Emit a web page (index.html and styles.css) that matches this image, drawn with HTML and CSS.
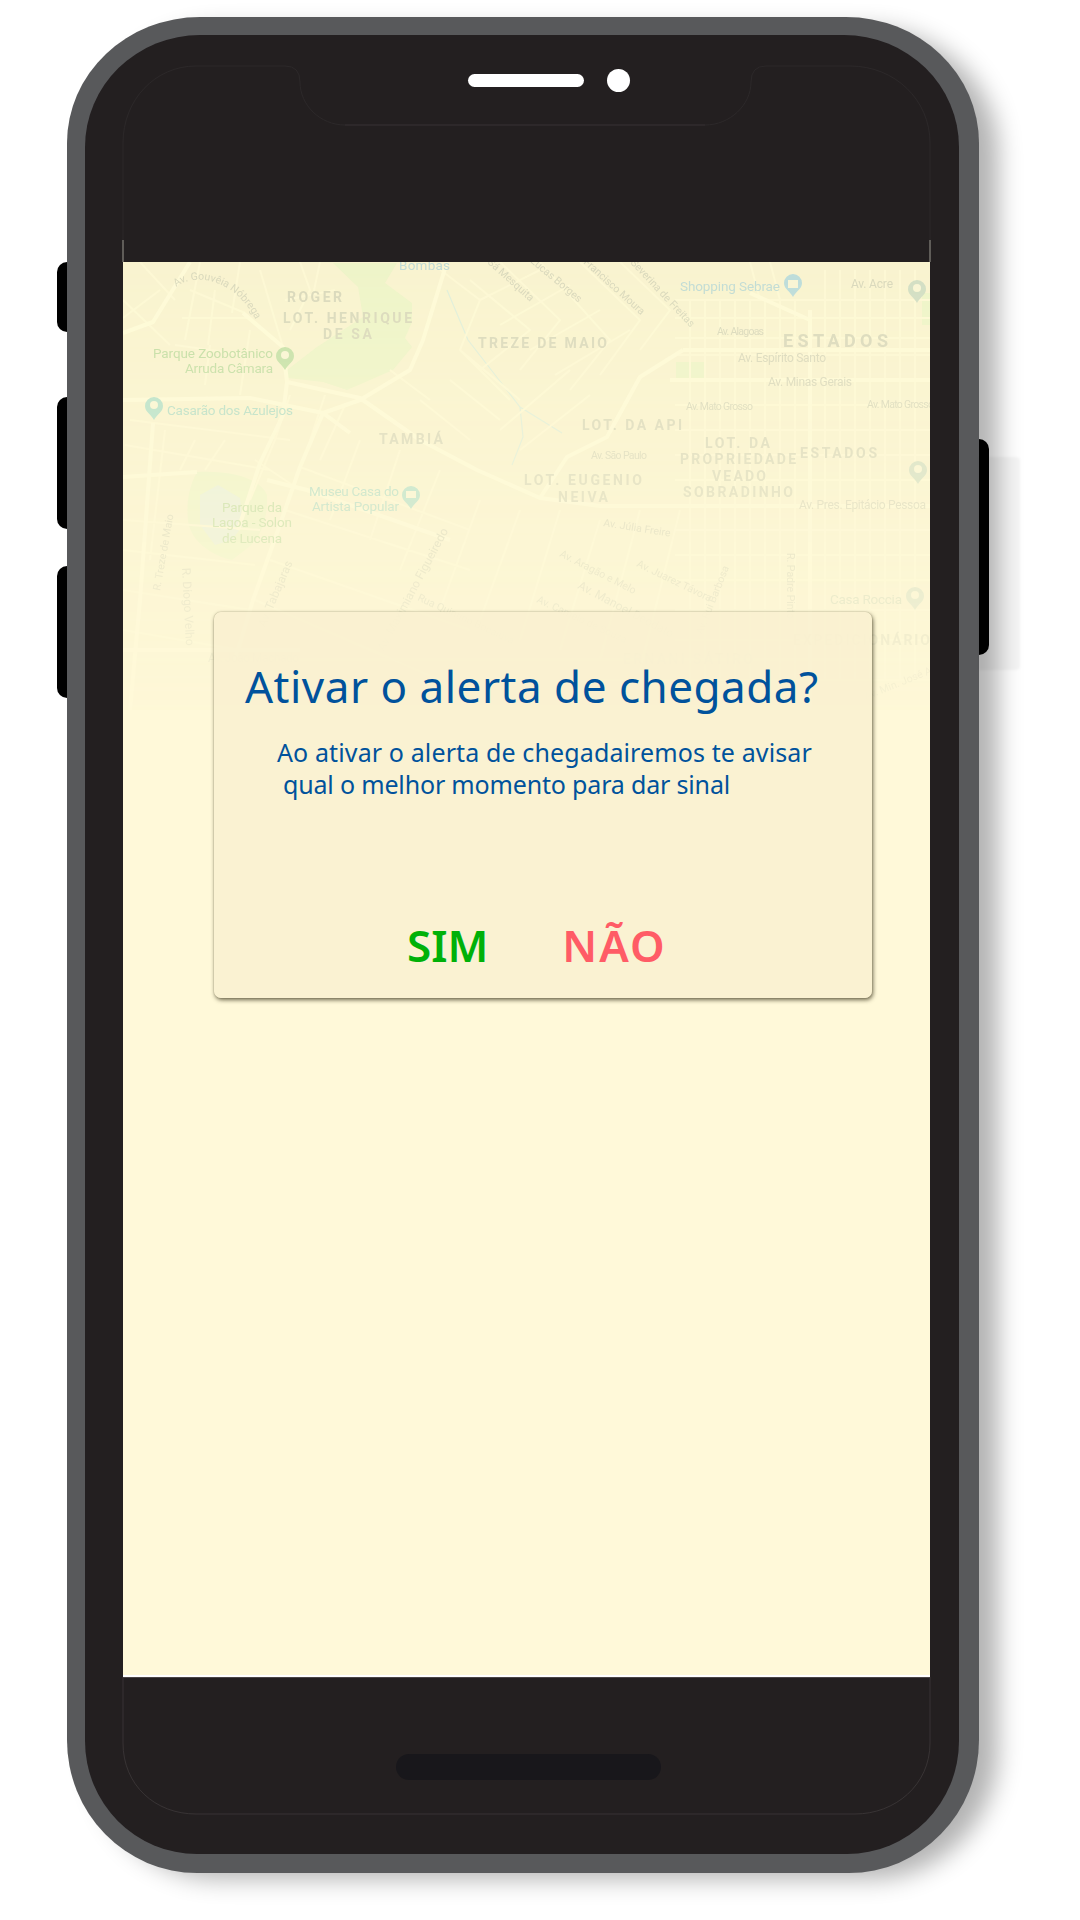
FILE: index.html
```html
<!DOCTYPE html>
<html lang="pt-BR">
<head>
<meta charset="utf-8">
<title>Alerta de chegada</title>
<link rel="stylesheet" href="styles.css">
</head>
<body>
<div class="phone">
  <span class="side-btn left b1"></span>
  <span class="side-btn left b2"></span>
  <span class="side-btn left b3"></span>
  <span class="side-btn right b4"></span>
  <div class="device">
    <div class="top-bar">
      <span class="speaker"></span>
      <span class="camera"></span>
    </div>
    <div class="screen">
      <svg class="map" width="807" height="448" viewBox="123 262 807 448" xmlns="http://www.w3.org/2000/svg">
        <defs>
          <path id="pin" d="M0-11a9 9 0 0 1 9 9c0 6-6 8-9 14c-3-6-9-8-9-14a9 9 0 0 1 9-9z"/>
          <path id="c1" d="M176 287C195 272 225 282 240 298S258 325 262 335"/>
        </defs>
        <rect class="land" x="123" y="262" width="807" height="448"/>
        <path class="park" d="M333 263H397L385 283L412 303V322L405 338L412 347L393 370L347 390L323 382L288 378L287 370L317 347L363 317L358 287Z"/>
        <path class="park" d="M197 472C230 470 260 478 267 495C268 520 260 540 245 550L232 560C210 555 190 540 188 520C186 500 190 485 197 472Z"/>
        <path class="lake" d="M200 495L218 485L240 498L243 525L232 540L215 545L200 525Z"/>
        <rect class="park" x="676" y="362" width="28" height="18"/>
        <rect class="park" x="922" y="293" width="8" height="32"/>
        <path class="water" d="M447 290L468 340L520 407L562 433M520 407L523 437L512 465"/>
        <path class="minor" d="M123 300L170 345M123 318L160 290M140 262L175 300M190 290L245 313M200 262L185 340M215 290L208 345M240 262L232 313M182 318H250M175 345L245 355M210 345L205 385M250 330L240 395
          M300 262L310 290L290 330M320 262L312 300M285 300L335 290M260 270L283 347M290 395L275 440L250 500M325 395L310 440M345 405L320 460M130 420L290 440M125 445L270 470M123 520L260 530M123 550L255 565M123 590L250 610M123 630L240 650M165 430L150 560M195 440L180 470M225 440L205 470M255 460L300 490
          M300 467L470 530M285 510L470 570M270 560L470 630M255 600L440 680M360 440L330 520M400 450L370 540M440 470L400 570M480 500L440 610M520 510L480 620M560 510L520 640M600 520L560 650M640 510L600 660M680 510L640 670
          M430 262L480 300L460 350L520 400M470 280L530 330L480 370M500 262L560 320L520 370M540 262L610 340L570 390M580 262L640 320L600 375M620 262L670 310L640 350M480 300L540 270M500 325L570 285M530 350L600 310M555 375L630 330M460 350L510 400M590 395L520 450M570 370L500 430M450 380L500 420M420 400L470 440M390 370L430 400
          M690 300V680M705 300V680M720 300V680M735 300V680M750 300V680M765 300V680M780 300V680M795 300V680M825 270V680M840 270V680M855 270V680M870 270V680M885 270V680M900 270V680M915 270V680
          M675 300H930M675 318H930M675 338H930M675 355H930M675 405H930M675 430H930M675 455H930M675 480H930M675 530H930M675 555H930M675 580H930M675 610H930M675 640H930M600 680H930M750 262L760 300M770 262L780 300"/>
        <path class="major" d="M447 262L423 340L410 370L360 400L323 413L300 467L277 533L253 600L235 660M123 333L153 322L177 283L190 262M243 313L283 347L287 382L360 398L420 440L477 470L540 498L600 506H930M287 382L283 415L260 463L238 530M153 423L140 600L130 710M123 400L250 398L323 413L350 433M123 477L197 472M267 480L307 490L450 540M683 350L640 377L607 437L567 457L540 498M683 350H930M810 310V710M670 380H930M750 293L810 320M123 650H300"/>
        <g class="pin green"><use href="#pin" x="285" y="358"/><circle cx="285" cy="355" r="4"/></g>
        <g class="pin teal"><use href="#pin" x="154" y="408"/><circle cx="154" cy="405" r="4"/></g>
        <g class="pin teal"><use href="#pin" x="411" y="497"/><rect x="406" y="491" width="10" height="7"/></g>
        <g class="pin blue"><use href="#pin" x="793" y="285"/><rect x="788" y="280" width="10" height="8"/></g>
        <g class="pin grey"><use href="#pin" x="917" y="291"/><circle cx="917" cy="288" r="4"/></g>
        <g class="pin grey"><use href="#pin" x="918" y="472"/><circle cx="918" cy="469" r="4"/></g>
        <g class="pin grey"><use href="#pin" x="915" y="598"/><circle cx="915" cy="595" r="4"/></g>

        <text class="district" x="287" y="302" textLength="55">ROGER</text>
        <text class="district" x="283" y="323" textLength="129">LOT. HENRIQUE</text>
        <text class="district" x="323" y="339" textLength="49">DE SA</text>
        <text class="district" x="478" y="348" textLength="129">TREZE DE MAIO</text>
        <text class="district" x="379" y="444" textLength="64">TAMBIÁ</text>
        <text class="district big" x="783" y="347" textLength="105">ESTADOS</text>
        <text class="district" x="582" y="430" textLength="100">LOT. DA API</text>
        <text class="district" x="705" y="448" textLength="65">LOT. DA</text>
        <text class="district" x="680" y="464" textLength="116">PROPRIEDADE</text>
        <text class="district" x="712" y="481" textLength="54">VEADO</text>
        <text class="district" x="683" y="497" textLength="110">SOBRADINHO</text>
        <text class="district" x="800" y="458" textLength="77">ESTADOS</text>
        <text class="district" x="524" y="485" textLength="118">LOT. EUGENIO</text>
        <text class="district" x="558" y="502" textLength="50">NEIVA</text>
        <text class="district" x="793" y="645" textLength="137">EXPEDICIONÁRIO</text>
        <text class="district" x="623" y="664" textLength="130">ERNANI SÁTIRO</text>

        <text class="poi g" x="153" y="358" textLength="120">Parque Zoobotânico</text>
        <text class="poi g" x="185" y="373" textLength="88">Arruda Câmara</text>
        <text class="poi t" x="167" y="415" textLength="126">Casarão dos Azulejos</text>
        <text class="poi t" x="309" y="496" textLength="90">Museu Casa do</text>
        <text class="poi t" x="312" y="511" textLength="87">Artista Popular</text>
        <text class="poi g" x="222" y="512" textLength="60">Parque da</text>
        <text class="poi g" x="212" y="527" textLength="80">Lagoa - Solon</text>
        <text class="poi g" x="222" y="543" textLength="60">de Lucena</text>
        <text class="poi b" x="680" y="291" textLength="100">Shopping Sebrae</text>
        <text class="poi b" x="399" y="270" textLength="51">Bombas</text>
        <text class="poi c" x="830" y="604" textLength="72">Casa Roccia</text>

        <text class="street" x="851" y="288" textLength="42">Av. Acre</text>
        <text class="street sm" x="717" y="335" textLength="47">Av. Alagoas</text>
        <text class="street" x="738" y="362" textLength="88">Av. Espírito Santo</text>
        <text class="street" x="768" y="386" textLength="84">Av. Minas Gerais</text>
        <text class="street sm" x="686" y="410" textLength="67">Av. Mato Grosso</text>
        <text class="street sm" x="867" y="408" textLength="67">Av. Mato Grosso</text>
        <text class="street sm" x="591" y="459" textLength="56">Av. São Paulo</text>
        <text class="street" x="799" y="509" textLength="127">Av. Pres. Epitácio Pessoa</text>
        <text class="street" x="208" y="662" textLength="91">Av. João Machado</text>

        <text class="street sm"><textPath href="#c1">Av. Gouvêia Nóbrega</textPath></text>
        <text class="street sm" transform="translate(583 263) rotate(42)">Francisco Moura</text>
        <text class="street sm" transform="translate(630 263) rotate(47)">Severina de Freitas</text>
        <text class="street sm" transform="translate(530 262) rotate(40)">Lucas Borges</text>
        <text class="street sm" transform="translate(487 263) rotate(42)">Sá Mesquita</text>
        <text class="street sm" transform="translate(160 591) rotate(-80)">R. Treze de Maio</text>
        <text class="street" transform="translate(182 568) rotate(87)">R. Diogo Velho</text>
        <text class="street" transform="translate(265 628) rotate(-67)">Av. Tabajaras</text>
        <text class="street" transform="translate(384 652) rotate(-62)">Av. Maximiano Figueiredo</text>
        <text class="street sm" transform="translate(417 600) rotate(25)">Rua Quintino Bocaiúva</text>
        <text class="street sm" transform="translate(603 526) rotate(9)">Av. Júlia Freire</text>
        <text class="street sm" transform="translate(559 556) rotate(27)">Av. Aragão e Melo</text>
        <text class="street sm" transform="translate(636 566) rotate(26)">Av. Juarez Távora</text>
        <text class="street" transform="translate(577 588) rotate(28)">Av. Manoel Deodato</text>
        <text class="street sm" transform="translate(536 602) rotate(25)">Av. Camelo de Souza</text>
        <text class="street sm" transform="translate(702 635) rotate(-68)">Av. Rui Barbosa</text>
        <text class="street sm" transform="translate(787 553) rotate(90)">R. Padre Pinto</text>
        <text class="street sm" transform="translate(866 700) rotate(-22)">Av. Min. José Américo</text>
      </svg>
      <div class="dialog">
        <h1 class="dialog-title">Ativar o alerta de chegada?</h1>
        <p class="dialog-text">Ao ativar o alerta de chegadairemos te avisar<br>qual o melhor momento para dar sinal</p>
        <div class="dialog-actions">
          <span class="action yes">SIM</span>
          <span class="action no">NÃO</span>
        </div>
      </div>
    </div>
    <div class="bottom-bar">
      <span class="home-bar"></span>
    </div>
  </div>
  <svg class="outline" width="912" height="1856" viewBox="67 17 912 1856" xmlns="http://www.w3.org/2000/svg">
    <path class="outline-path faint" d="M123 240V143C123 100 155 66 196 66H285Q300 66 300 82C300 105 320 125 345 125"/>
    <path class="outline-path faint" d="M705 125C730 125 751 105 751 82Q751 66 766 66H850C895 66 930 100 930 143V240"/>
    <path class="outline-path" d="M345 125H705"/>
    <path class="outline-path" d="M123 1677V1743C123 1785 155 1814 196 1814H855C895 1814 930 1785 930 1743V1677"/>
    <path class="edge" d="M123 240V262M930 240V262"/>
  </svg>
</div>
</body>
</html>
```
FILE: styles.css
```css
* { box-sizing: border-box; }
html, body { margin: 0; padding: 0; background: #fff; }
body { width: 1080px; height: 1920px; overflow: hidden; padding: 17px 0 0 67px; font-family: "Noto Sans", "Lato", sans-serif; }

.phone {
  position: relative;
  width: 912px;
  height: 1856px;
  padding: 18px 20px 19px 18px;
  background: #58595b;
  border-radius: 133px 133px 130px 130px / 126px 126px 133px 133px;
  box-shadow: 22px 9px 24px -3px rgba(0, 0, 0, .3);
}
.side-btn { position: absolute; width: 10px; background: #000; }
.side-btn.left { left: -10px; border-radius: 10px 0 0 10px; }
.side-btn.right { right: -10px; border-radius: 0 10px 10px 0; }
.b1 { top: 245px; height: 70px; }
.b2 { top: 380px; height: 132px; }
.b3 { top: 549px; height: 132px; }
.b4 { top: 422px; height: 216px; }
.b4::after {
  content: "";
  position: absolute;
  left: 0;
  top: 18px;
  bottom: -15px;
  width: 41px;
  background: rgba(0, 0, 0, .04);
  border-radius: 0 4px 4px 0;
  filter: blur(1px);
}

.device {
  display: flex;
  flex-direction: column;
  height: 100%;
  background: #231f20;
  border-radius: 115px 115px 112px 112px / 112px 112px 113px 113px;
  overflow: hidden;
}
.top-bar {
  display: flex;
  align-items: flex-start;
  gap: 23px;
  flex: none;
  height: 227px;
  padding: 34px 0 0 383px;
}
.speaker { width: 116px; height: 13px; margin-top: 5px; background: #fff; border-radius: 7px; }
.camera { width: 23px; height: 23px; background: #fff; border-radius: 50%; }

.screen {
  position: relative;
  flex: none;
  height: 1415px;
  margin: 0 29px 0 38px;
  background: #fff9d9;
  border-bottom: 2px solid #fff;
  box-shadow: 0 1px 0 #4b4445;
}
.map {
  display: block;
  -webkit-mask-image: linear-gradient(#000, rgba(0, 0, 0, .2));
  mask-image: linear-gradient(#000, rgba(0, 0, 0, .2));
}
.land { fill: #f9f3cf; }
.park { fill: #eef4c8; }
.lake { fill: #e8efdb; }
.water { fill: none; stroke: #dfeeda; stroke-width: 1.2; }
.minor { fill: none; stroke: #fdf8d4; stroke-width: 2; }
.major { fill: none; stroke: #fefad7; stroke-width: 4; stroke-linejoin: round; }
.pin circle, .pin rect { fill: #f9f5d4; }
.pin.green use { fill: #c4e0a7; }
.pin.teal use { fill: #b2dfc9; }
.pin.blue use { fill: #bcdcda; }
.pin.grey use { fill: #d2dec3; }

.map text { font-family: "Roboto", "Liberation Sans", sans-serif; }
.district { font-size: 14px; font-weight: 700; fill: #d9d8bb; }
.district.big { font-size: 18px; }
.poi { font-size: 13.5px; }
.poi.g { fill: #c0dca2; }
.poi.t { fill: #b3dcc6; }
.poi.b { fill: #c0dbd4; }
.poi.c { fill: #d0d8b8; }
.street { font-size: 12px; fill: #d8d7bb; }
.street.sm { font-size: 10.5px; }

.dialog {
  position: absolute;
  left: 91px;
  top: 350px;
  display: flex;
  flex-direction: column;
  width: 658px;
  height: 386px;
  padding: 44px 0 0 31px;
  background: rgba(249, 240, 208, .88);
  border-radius: 7px;
  box-shadow: 1px 2px 4px rgba(60, 55, 30, .75), 0 0 1px rgba(60, 55, 30, .6);
}
.dialog-title {
  margin: 0;
  color: #00529c;
  font-size: 44px;
  font-weight: 400;
  letter-spacing: .5px;
  line-height: 60px;
  white-space: nowrap;
}
.dialog-text {
  margin: 20px 0 0 38px;
  color: #00529c;
  font-size: 25px;
  letter-spacing: -.17px;
  line-height: 32px;
  text-indent: -6px;
  white-space: nowrap;
}
.dialog-text::first-line { letter-spacing: .12px; }
.dialog-actions {
  display: flex;
  gap: 74px;
  margin: auto 0 25px 162px;
}
.action { font-size: 44px; font-weight: 600; line-height: 56px; }
.yes { color: #00b109; }
.no { color: #ff5c66; letter-spacing: 2px; }

.bottom-bar { flex: 1; padding: 77px 0 0 311px; }
.home-bar { display: block; width: 265px; height: 26px; background: #18171b; border-radius: 14px; }

.outline { position: absolute; left: 0; top: 0; pointer-events: none; }
.outline-path { fill: none; stroke: #3d393a; stroke-width: .8; }
.outline-path.faint { stroke: #2f2b2c; }
.edge { fill: none; stroke: #9c9a90; stroke-width: 1; }
```
